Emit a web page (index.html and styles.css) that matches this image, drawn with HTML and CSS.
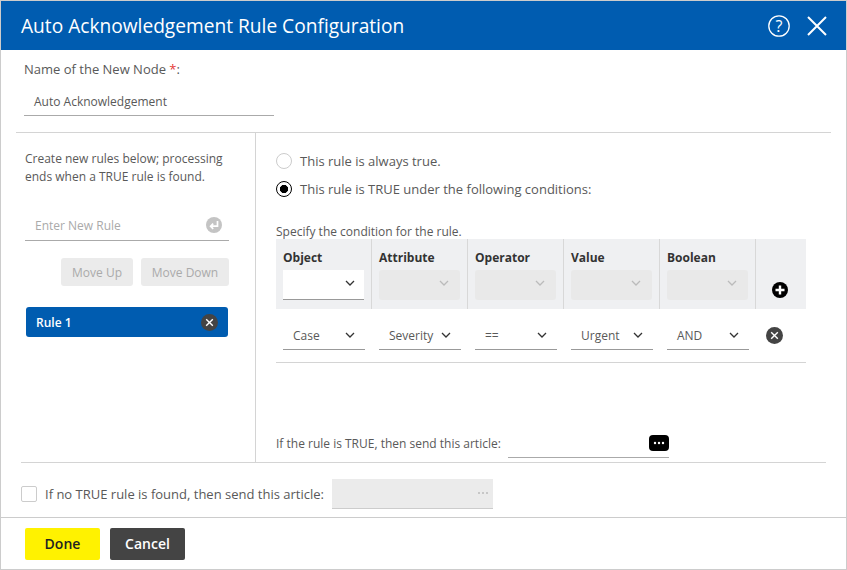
FILE: index.html
```html
<!DOCTYPE html>
<html lang="en">
<head>
    <meta charset="UTF-8">
    <title>Auto Acknowledgement Rule Configuration</title>
    <link rel="stylesheet" href="styles.css">
</head>
<body>
    <div class="dialog">
        <div class="title-bar">
            <h1 class="title">Auto Acknowledgement Rule Configuration</h1>
            <svg class="help-icon" width="24" height="24" viewBox="0 0 24 24">
                <circle cx="12" cy="12" r="10.2" fill="none" stroke="#fff" stroke-width="1.3"/>
                <text x="12" y="17.5" text-anchor="middle" class="help-mark">?</text>
            </svg>
            <svg class="close-icon" width="20" height="20" viewBox="0 0 20 20">
                <path d="M1 1 L19 19 M19 1 L1 19" stroke="#fff" stroke-width="2" fill="none"/>
            </svg>
        </div>

        <div class="node-name">
            <label class="node-label">Name of the New Node <span class="required">*</span>:</label>
            <div class="node-input">Auto Acknowledgement</div>
        </div>

        <div class="split">
            <div class="rules-pane">
                <p class="hint">Create new rules below; processing ends when a TRUE rule is found.</p>
                <div class="new-rule">
                    <span>Enter New Rule</span>
                    <svg width="16" height="16" viewBox="0 0 16 16">
                        <circle cx="8" cy="8" r="8" fill="#c4c4c4"/>
                        <path d="M11.5 4 V9.2 H4.8 M7.2 6.6 L4.6 9.2 L7.2 11.8" stroke="#fff" stroke-width="1.7" fill="none"/>
                    </svg>
                </div>
                <div class="move-buttons">
                    <button class="move-btn">Move Up</button>
                    <button class="move-btn">Move Down</button>
                </div>
                <div class="rule-item">
                    <span>Rule 1</span>
                    <svg width="17" height="17" viewBox="0 0 17 17">
                        <circle cx="8.5" cy="8.5" r="8.5" fill="#444"/>
                        <path d="M5.2 5.2 L11.8 11.8 M11.8 5.2 L5.2 11.8" stroke="#fff" stroke-width="1.4"/>
                    </svg>
                </div>
            </div>

            <div class="condition-pane">
                <div class="radio-row">
                    <span class="radio"></span>
                    <span>This rule is always true.</span>
                </div>
                <div class="radio-row">
                    <span class="radio checked"></span>
                    <span>This rule is TRUE under the following conditions:</span>
                </div>

                <div class="specify">Specify the condition for the rule.</div>
                <div class="cond-head">
                    <div class="cond-col">
                        <b>Object</b>
                        <div class="head-select active"><svg class="chev" width="10" height="6" viewBox="0 0 10 6"><path d="M1 1 L5 5 L9 1" stroke="#333" stroke-width="1.3" fill="none"/></svg></div>
                    </div>
                    <div class="cond-col">
                        <b>Attribute</b>
                        <div class="head-select"><svg class="chev" width="10" height="6" viewBox="0 0 10 6"><path d="M1 1 L5 5 L9 1" stroke="#bbb" stroke-width="1.3" fill="none"/></svg></div>
                    </div>
                    <div class="cond-col">
                        <b>Operator</b>
                        <div class="head-select"><svg class="chev" width="10" height="6" viewBox="0 0 10 6"><path d="M1 1 L5 5 L9 1" stroke="#bbb" stroke-width="1.3" fill="none"/></svg></div>
                    </div>
                    <div class="cond-col">
                        <b>Value</b>
                        <div class="head-select"><svg class="chev" width="10" height="6" viewBox="0 0 10 6"><path d="M1 1 L5 5 L9 1" stroke="#bbb" stroke-width="1.3" fill="none"/></svg></div>
                    </div>
                    <div class="cond-col">
                        <b>Boolean</b>
                        <div class="head-select"><svg class="chev" width="10" height="6" viewBox="0 0 10 6"><path d="M1 1 L5 5 L9 1" stroke="#bbb" stroke-width="1.3" fill="none"/></svg></div>
                    </div>
                    <div class="cond-add">
                        <svg width="16" height="16" viewBox="0 0 16 16">
                            <circle cx="8" cy="8" r="8" fill="#000"/>
                            <path d="M8 3.5 V12.5 M3.5 8 H12.5" stroke="#fff" stroke-width="2.4"/>
                        </svg>
                    </div>
                </div>
                <div class="cond-row">
                    <div class="row-select"><span>Case</span><svg class="chev" width="10" height="6" viewBox="0 0 10 6"><path d="M1 1 L5 5 L9 1" stroke="#333" stroke-width="1.3" fill="none"/></svg></div>
                    <div class="row-select"><span>Severity</span><svg class="chev" width="10" height="6" viewBox="0 0 10 6"><path d="M1 1 L5 5 L9 1" stroke="#333" stroke-width="1.3" fill="none"/></svg></div>
                    <div class="row-select"><span>==</span><svg class="chev" width="10" height="6" viewBox="0 0 10 6"><path d="M1 1 L5 5 L9 1" stroke="#333" stroke-width="1.3" fill="none"/></svg></div>
                    <div class="row-select"><span>Urgent</span><svg class="chev" width="10" height="6" viewBox="0 0 10 6"><path d="M1 1 L5 5 L9 1" stroke="#333" stroke-width="1.3" fill="none"/></svg></div>
                    <div class="row-select"><span>AND</span><svg class="chev" width="10" height="6" viewBox="0 0 10 6"><path d="M1 1 L5 5 L9 1" stroke="#333" stroke-width="1.3" fill="none"/></svg></div>
                    <svg class="row-remove" width="17" height="17" viewBox="0 0 17 17">
                        <circle cx="8.5" cy="8.5" r="8.5" fill="#444"/>
                        <path d="M5.2 5.2 L11.8 11.8 M11.8 5.2 L5.2 11.8" stroke="#fff" stroke-width="1.4"/>
                    </svg>
                </div>
                <div class="send-row">
                    <span class="send-label">If the rule is TRUE, then send this article:</span>
                    <div class="article-input">
                        <svg width="20" height="16" viewBox="0 0 20 16">
                            <rect width="20" height="16" rx="4" fill="#000"/>
                            <circle cx="6" cy="8" r="1.2" fill="#fff"/>
                            <circle cx="10" cy="8" r="1.2" fill="#fff"/>
                            <circle cx="14" cy="8" r="1.2" fill="#fff"/>
                        </svg>
                    </div>
                </div>
            </div>
        </div>

        <div class="fallback">
            <span class="checkbox"></span>
            <span>If no TRUE rule is found, then send this article:</span>
            <div class="article-disabled">
                <svg width="12" height="4" viewBox="0 0 12 4">
                    <circle cx="2" cy="2" r="1" fill="#bbb"/>
                    <circle cx="6" cy="2" r="1" fill="#bbb"/>
                    <circle cx="10" cy="2" r="1" fill="#bbb"/>
                </svg>
            </div>
        </div>

        <div class="footer">
            <button class="btn-done">Done</button>
            <button class="btn-cancel">Cancel</button>
        </div>
    </div>
</body>
</html>
```

FILE: styles.css
```css
* {
    box-sizing: border-box;
}
body {
    margin: 0;
    font-family: "Open Sans", sans-serif;
    font-size: 12px;
    color: #595959;
    background-color: #fff;
}
.dialog {
    display: flex;
    flex-direction: column;
    width: 847px;
    height: 570px;
    border: 1px solid #ccc;
    overflow: hidden;
}
.title-bar {
    display: flex;
    align-items: center;
    flex: none;
    height: 49px;
    padding: 0 19px 0 20px;
    background-color: #005cb0;
    color: #fff;
}
.title {
    flex: 1;
    margin: 0;
    font-size: 19.15px;
    font-weight: 400;
}
.help-mark {
    font-family: "Open Sans", sans-serif;
    font-size: 16px;
    fill: #fff;
}
.close-icon {
    margin-left: 16px;
}

/* name of the node */
.node-name {
    flex: none;
    height: 82px;
    padding: 10px 0 0 23px;
}
.node-label {
    display: block;
    line-height: 18px;
    font-size: 13px;
}
.required {
    color: #e53935;
}
.node-input {
    width: 250px;
    height: 29px;
    margin-top: 9px;
    padding: 6px 0 0 10px;
    border-bottom: 1px solid #aaa;
    font-size: 12px;
    line-height: 18px;
}

/* rules list and conditions */
.split {
    display: flex;
    flex: none;
    height: 330px;
    margin: 0 15px;
    border-top: 1px solid #d4d4d4;
}
.rules-pane {
    flex: none;
    width: 240px;
    padding: 17px 0 0 9px;
    border-right: 1px solid #d4d4d4;
}
.hint {
    width: 205px;
    margin: 0;
    line-height: 18px;
}
.new-rule {
    display: flex;
    align-items: center;
    justify-content: space-between;
    width: 204px;
    height: 33px;
    margin-top: 22px;
    padding: 2px 7px 0 10px;
    border-bottom: 1px solid #aaa;
    color: #aaa;
}
.move-buttons {
    display: flex;
    justify-content: flex-end;
    gap: 8px;
    width: 204px;
    margin-top: 17px;
}
.move-btn {
    width: 72px;
    height: 28px;
    padding: 0;
    border: none;
    border-radius: 3px;
    background-color: #ebebeb;
    color: #aaa;
    font-family: inherit;
    font-size: 12px;
}
.move-btn:last-child {
    width: 88px;
}
.rule-item {
    display: flex;
    align-items: center;
    justify-content: space-between;
    width: 202px;
    height: 30px;
    margin: 21px 0 0 1px;
    padding: 0 10px;
    border-radius: 3px;
    background-color: #005cb0;
    color: #fff;
    font-weight: 600;
}
.condition-pane {
    display: flex;
    flex-direction: column;
    flex: 1;
    padding: 18px 0 0 20px;
}
.radio-row {
    display: flex;
    align-items: center;
    gap: 8px;
    height: 20px;
    margin-bottom: 8px;
    font-size: 13px;
}
.radio {
    width: 16px;
    height: 16px;
    border: 1px solid #ccc;
    border-radius: 50%;
}
.radio.checked {
    border: 1.5px solid #000;
    background: radial-gradient(circle, #000 0 3.8px, #fff 4.4px);
}
.specify {
    margin-top: 17px;
    line-height: 15px;
}
.cond-head {
    display: flex;
    width: 530px;
    height: 70px;
    background-color: #eff0f2;
}
.cond-col {
    flex: none;
    width: 96px;
    padding: 10px 0 0 7px;
    border-right: 1px solid #d8d8d8;
}
.cond-col b {
    display: block;
    font-weight: 700;
    color: #333;
    line-height: 18px;
}
.head-select {
    display: flex;
    align-items: center;
    justify-content: flex-end;
    width: 81px;
    height: 30px;
    margin-top: 3px;
    padding: 0 11px 4px 0;
    border-radius: 3px;
    background-color: #e9e9e9;
}
.head-select.active {
    padding-right: 9px;
    border-bottom: 1px solid #999;
    border-radius: 0;
    background-color: #fff;
}
.cond-add {
    display: flex;
    flex: 1;
    align-items: flex-end;
    padding: 0 0 11px 16px;
}
.cond-row {
    display: flex;
    align-items: flex-end;
    gap: 14px;
    width: 530px;
    height: 54px;
    padding: 0 0 12px 7px;
    border-bottom: 1px solid #d4d4d4;
}
.row-select {
    display: flex;
    align-items: center;
    justify-content: space-between;
    width: 82px;
    height: 30px;
    padding: 0 10px;
    border-bottom: 1px solid #999;
}
.row-select span {
    padding-top: 2px;
}
.row-remove {
    margin: 0 0 6px 3px;
}
.send-row {
    display: flex;
    align-items: center;
    gap: 7px;
    margin-top: 68px;
}
.send-label {
    padding-bottom: 2px;
}
.article-input {
    display: flex;
    align-items: center;
    justify-content: flex-end;
    width: 161px;
    height: 27px;
    padding-bottom: 3px;
    border-bottom: 1px solid #aaa;
}

/* bottom part */
.fallback {
    display: flex;
    align-items: center;
    flex: none;
    height: 55px;
    margin-left: 20px;
    width: 805px;
    padding-top: 7px;
    border-top: 1px solid #d4d4d4;
    gap: 8px;
    font-size: 13px;
}
.checkbox {
    width: 16px;
    height: 16px;
    border: 1px solid #ccc;
    border-radius: 2px;
}
.article-disabled {
    display: flex;
    align-items: center;
    justify-content: flex-end;
    width: 161px;
    height: 30px;
    padding-right: 4px;
    border-bottom: 1px solid #ccc;
    background-color: #ebebeb;
}
.footer {
    display: flex;
    flex: 1;
    gap: 10px;
    padding: 10px 0 0 24px;
    border-top: 1px solid #ccc;
}
.footer button {
    width: 75px;
    height: 32px;
    padding: 0 0 2px;
    border: none;
    border-radius: 2px;
    font-family: inherit;
    font-size: 14px;
    font-weight: 600;
}
.btn-done {
    background-color: #fff200;
    color: #222;
}
.btn-cancel {
    background-color: #444;
    color: #fff;
}
```
